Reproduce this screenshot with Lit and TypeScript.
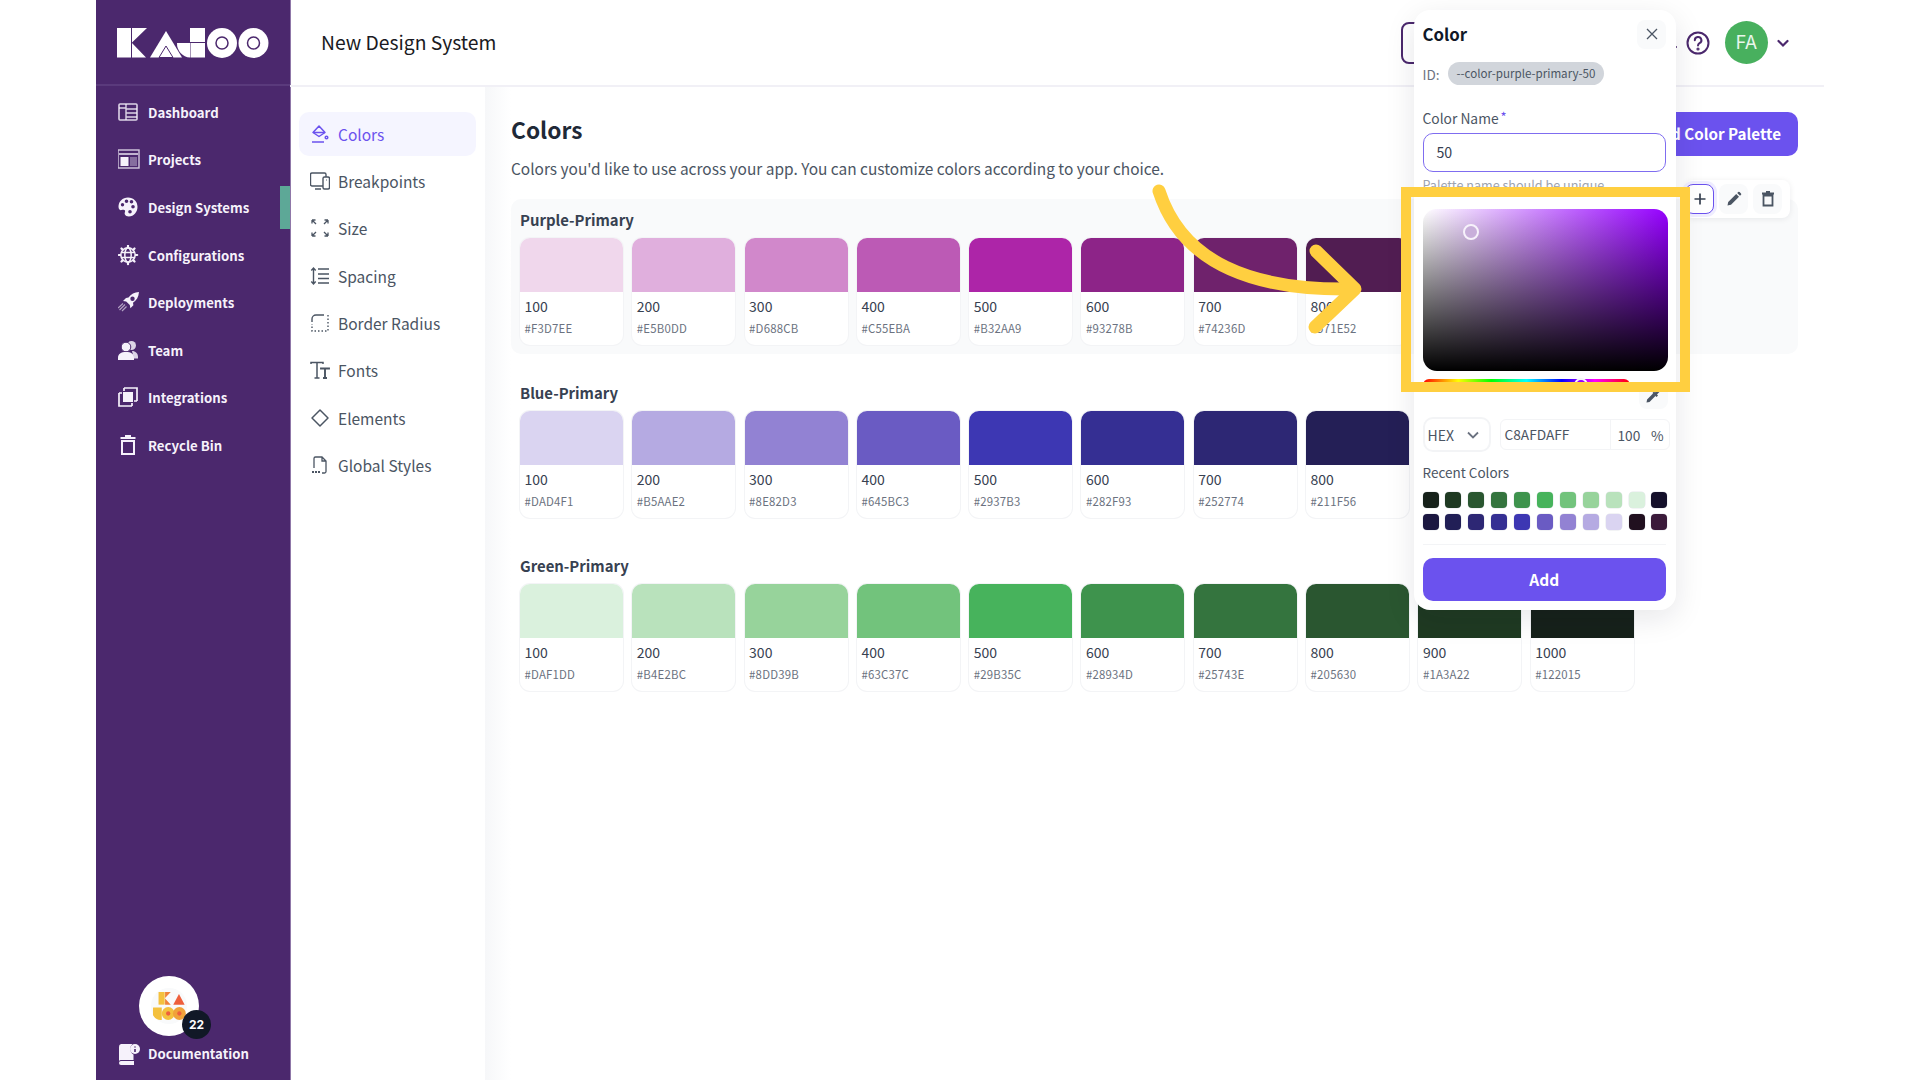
import { LitElement, html, css, svg } from "lit";
import { customElement } from "lit/decorators.js";

const W = "#f6f2fb";
const navIcons: Record<string, any> = {
  dashboard: svg`<rect x="1" y="2" width="18" height="16" rx="1" fill="none" stroke="${W}" stroke-opacity=".85" stroke-width="1.6"/><path d="M8 2v16M8 7h11M8 11h11M8 15h11M1 6h7" stroke="${W}" stroke-opacity=".85" stroke-width="1.4" fill="none"/>`,
  projects: svg`<rect x="0" y="1" width="21" height="18" fill="none" stroke="${W}" stroke-opacity=".8" stroke-width="1.4"/><path d="M1 5h19" stroke="${W}" stroke-width="1.4"/><rect x="2.5" y="8" width="8" height="9" fill="${W}"/><rect x="12" y="8" width="7" height="9" fill="${W}" fill-opacity=".35"/>`,
  palette: svg`<path fill-rule="evenodd" fill="${W}" d="M10 .5C4.6.5.5 4.5.5 9.8c0 2.7 1.6 3.6 3 3.3 1.700-.3 2.900-.6 3.500.5.6 1-.8 2.200-.2 3.700.6 1.400 2.200 2.200 4 2.200 5.200 0 8.700-4.500 8.700-9.700C19.500 4.500 15.500.5 10 .5zM4.500 9.500a1.700 1.700 0 1 1 0-3.400 1.700 1.700 0 0 1 0 3.400zM8.500 6a1.800 1.800 0 1 1 0-3.600A1.800 1.800 0 0 1 8.500 6zm5 .5a1.800 1.800 0 1 1 0-3.600 1.800 1.800 0 0 1 0 3.600zm1.500 5a1.800 1.800 0 1 1 0-3.600 1.800 1.800 0 0 1 0 3.600zm-3 5a1.800 1.800 0 1 1 0-3.600 1.800 1.800 0 0 1 0 3.600z"/>`,
  config: svg`<g fill="none" stroke="${W}" stroke-width="1.500"><circle cx="10" cy="10" r="7.200"/><ellipse cx="10" cy="10" rx="3.200" ry="7.200"/><path d="M3 7.500h14M3 12.500h14"/></g><path stroke="${W}" stroke-width="2.200" stroke-linecap="round" d="M10 .8v1.600M10 17.600v1.600M.8 10h1.600M17.600 10h1.600M3.500 3.500l1.100 1.100M15.400 15.400l1.100 1.100M16.500 3.500l-1.100 1.100M4.600 15.400l-1.100 1.100"/>`,
  rocket: svg`<path fill-rule="evenodd" fill="${W}" d="M21 0c-4.500.3-8 2-10.500 5.500L8 6 5 9l3.200.6L11.800 13l.6 3.200 3-3-.4-2.500C18.500 8.500 20.600 5 21 0zM14.500 9a2.200 2.200 0 1 1 0-4.400 2.200 2.200 0 0 1 0 4.400z"/><path d="M7 12.500 1.500 18M8.500 14.500 4 19M5 11.500 0 16" stroke="${W}" stroke-opacity=".6" stroke-width="1.200"/>`,
  team: svg`<circle cx="13.500" cy="5.500" r="4.500" fill="${W}" fill-opacity=".85"/><path d="M14 11c3.500 0 6 2.500 6 6v1.500h-4z" fill="${W}" fill-opacity=".85"/><circle cx="8" cy="7" r="4.800" fill="${W}" stroke="#4b286d"/><path d="M0 20v-2.500C0 14 3 12 8 12s8 2 8 5.500V20z" fill="${W}"/>`,
  integrations: svg`<path d="M6 1h13v13M1 6v13h13" fill="none" stroke="${W}" stroke-width="1.700"/><path d="M6 1v3M19 14h-3M1 6h3M14 19v-3" stroke="${W}" stroke-width="1.700"/><rect x="5" y="5" width="10" height="10" fill="${W}"/>`,
  bin: svg`<path d="M4 6h12v13H4z" fill="none" stroke="${W}" stroke-width="2"/><path d="M2.500 3h15M7 1h6" stroke="${W}" stroke-width="1.800"/>`,
  docs: svg`<path fill="${W}" d="M3 1h11.500a6.500 6.500 0 0 0 1 10.600V17H3.500A2.500 2.500 0 0 0 1 18V4a3 3 0 0 1 2-3zM1 20a2 2 0 0 1 2-2h13v4H3a2 2 0 0 1-2-2z"/><circle cx="17" cy="6" r="5" fill="${W}"/><path d="M17 3.500v1M17 6v3" stroke="#4b286d" stroke-width="1.600"/>`,
};

const G = "#4b5563";
const subIcons: Record<string, any> = {
  colors: svg`<g fill="none" stroke="#6b52ee" stroke-width="1.500"><path d="M9 2 3 8.500l6 4 6-4z" stroke-linejoin="round"/><path d="M3.500 8.500h11.500M2 18h12"/><circle cx="16.500" cy="13.500" r="1.300"/></g>`,
  breakpoints: svg`<g fill="none" stroke="${G}" stroke-width="1.400"><path d="M13 15H2a1.500 1.500 0 0 1-1.500-1.500V3.500A1.500 1.500 0 0 1 2 2h12.500A1.500 1.500 0 0 1 16 3.500V6"/><rect x="13" y="6" width="6.500" height="12" rx="1.500"/><path d="M5 18h6M16 9h.6"/></g>`,
  size: svg`<g fill="none" stroke="${G}" stroke-width="1.300"><path d="M2 2l4 4M2 2v3.500M2 2h3.500M18 2l-4 4M18 2v3.500M18 2h-3.500M2 18l4-4M2 18v-3.500M2 18h3.500M18 18l-4-4M18 18v-3.500M18 18h-3.500"/></g>`,
  spacing: svg`<g fill="none" stroke="${G}" stroke-width="1.400"><path d="M3.500 2v16M1.300 4.500 3.500 2l2.200 2.500M1.300 15.500 3.500 18l2.200-2.500M8 3h11M8 8h11M8 12.500h11M8 17h11"/></g>`,
  radius: svg`<g fill="none" stroke="${G}" stroke-width="1.400"><path d="M2 9V6a4 4 0 0 1 4-4h8" /><path stroke-dasharray="1.500 2" d="M18 2v16H2v-7"/></g>`,
  fonts: svg`<g fill="none" stroke="${G}" stroke-width="1.500"><path d="M1 4V2.500h12V4M7 2.500V18M4.500 18h5"/><path d="M11 9.500V8.500h8v1M15 8.500V18M13 18h4" stroke-width="1.900"/></g>`,
  elements: svg`<path d="M10 2 18 10 10 18 2 10z" fill="none" stroke="${G}" stroke-width="1.500" stroke-linejoin="round"/>`,
  css: svg`<g fill="none" stroke="${G}" stroke-width="1.300"><path d="M4 13V3.500A1.500 1.500 0 0 1 5.500 2H12l4 4v10.500a1.500 1.500 0 0 1-1.500 1.500H12M12 2v4h4"/><path stroke-dasharray="2 1" stroke-width="2" d="M2 17h8"/></g>`,
};

const sidebarNav = [
  ["Dashboard", "dashboard"], ["Projects", "projects"], ["Design Systems", "palette"], ["Configurations", "config"],
  ["Deployments", "rocket"], ["Team", "team"], ["Integrations", "integrations"], ["Recycle Bin", "bin"],
];
const subNav = [
  ["Colors", "colors"], ["Breakpoints", "breakpoints"], ["Size", "size"], ["Spacing", "spacing"],
  ["Border Radius", "radius"], ["Fonts", "fonts"], ["Elements", "elements"], ["Global Styles", "css"],
];
const steps = ["100", "200", "300", "400", "500", "600", "700", "800", "900", "1000"];
const palettes = [
  { name: "Purple-Primary", active: true, shown: ["#F0D7EC","#E0AFDD","#D188CB","#BC5AB5","#AD25A8","#8D2488","#6F226C","#511D52","#3B1A3A","#21101F"], hex: ["#F3D7EE","#E5B0DD","#D688CB","#C55EBA","#B32AA9","#93278B","#74236D","#571E52","#3B1A3A","#21101F"] },
  { name: "Blue-Primary", active: false, shown: ["#DAD4F1","#B5AAE2","#9282D3","#6A5BC3","#3D37B3","#352F93","#2D2774","#241F56","#1B1740","#14102A"], hex: ["#DAD4F1","#B5AAE2","#8E82D3","#645BC3","#2937B3","#282F93","#252774","#211F56","#1B1740","#14102A"] },
  { name: "Green-Primary", active: false, shown: ["#DAF1DD","#B9E2BC","#97D39B","#72C37C","#47B35C","#3E934D","#34743E","#2A5630","#1F3A22","#16211A"], hex: ["#DAF1DD","#B4E2BC","#8DD39B","#63C37C","#29B35C","#28934D","#25743E","#205630","#1A3A22","#122015"] },
];
const recent = [
  "#16211a","#1f3a22","#2a5630","#34743e","#3e934d","#47b35c","#72c37c","#97d39b","#b9e2bc","#daf1dd","#14102a",
  "#1b1740","#211f56","#2d2774","#352f93","#3d37b3","#6a5bc3","#9282d3","#b5aae2","#dad4f1","#21101f","#3b1a3a",
];

function logo(a: string, b: string, cut: string) {
  return svg`
    <rect x="0" y="0" width="14" height="29.500" fill="${a}"/>
    <path d="M15 0h15L15 14.500zM15 15l14 14.500H15z" fill="${a}"/>
    <path d="M33 29.500 49 3 65 29.500z" fill="${a}"/>
    <path d="M42 29.500 49 18l7 11.500z" fill="none" stroke="${cut}" stroke-width="1"/>
    <rect x="73" y="0" width="15" height="14" fill="${a}"/>
    <rect x="73.500" y="15" width="14.500" height="14.500" fill="${a}"/>
    <path d="M60 15h13v14.500A14 14 0 0 1 60 15z" fill="${a}"/>
    <circle cx="105" cy="15" r="15" fill="${b}"/>
    <circle cx="105" cy="15" r="6" fill="none" stroke="${cut}" stroke-width="1.500"/>
    <circle cx="136.500" cy="15" r="15" fill="${b}"/>
    <circle cx="136.500" cy="15" r="6" fill="none" stroke="${cut}" stroke-width="1.500"/>`;
}

@customElement("app-root")
export class AppRoot extends LitElement {
  static styles = css`
    :host { display: block; width: 1920px; height: 1080px; font-family: "Noto Sans CJK SC", "Noto Sans", sans-serif; }
    * { box-sizing: border-box; }
    .page { position: relative; width: 1920px; height: 1080px; overflow: hidden; background: #fff; display: flex; padding: 0 96px; }
    .sidebar { width: 195px; flex: none; background: #4b286d; border-right: 1px solid #8f77a8; display: flex; flex-direction: column; }
    .brand { height: 86px; flex: none; border-bottom: 2px solid #5a3a7c; padding: 28px 0 0 21px; }
    .brand svg { display: block; }
    .nav { padding-top: 3px; display: flex; flex-direction: column; position: relative; }
    .nav-item { height: 47.6px; display: flex; align-items: center; gap: 8px; padding-left: 22px; font-size: 13.200px; font-weight: 600; line-height: 20px; color: #f6f2fb; position: relative; }
    .nav-item svg { width: 22px; height: 22px; flex: none; }
    .indicator { position: absolute; right: 0; top: 2px; width: 10px; height: 43px; background: #5da897; }
    .side-foot { margin-top: auto; padding-bottom: 14px; }
    .avatar { position: relative; width: 60px; height: 60px; margin: 0 0 0 43px; border-radius: 50%; background: #fff; display: flex; align-items: center; justify-content: center; }
    .avatar-in { width: 36px; height: 36px; border-radius: 50%; background: #f9fafb; display: flex; align-items: center; justify-content: center; }
    .badge { position: absolute; left: 43px; top: 34px; width: 29px; height: 29px; border-radius: 50%; background: #111827; color: #fff; font: 700 12px/29px Inter, sans-serif; text-align: center; }
    .side-foot .nav-item { height: 24px; margin-top: 6px; }

    .right { flex: 1; min-width: 0; display: flex; flex-direction: column; margin-left: -1px; }
    .topbar { height: 87px; flex: none; display: flex; align-items: center; padding: 0 34px 0 31px; border-bottom: 2px solid #f1f0f6; }
    .topbar h1 { margin: 0 0 1px; font-size: 19.300px; font-weight: 400; line-height: 28px; color: #1a1a22; }
    .outline { margin-left: auto; width: 268px; height: 42px; border: 2px solid #4b286d; border-radius: 8px; }
    .dot { width: 2px; height: 2px; border-radius: 50%; background: #4b286d; margin: 8px 0 0 6px; align-self: center; }
    .help { margin-left: 9px; width: 24px; height: 24px; display: block; }
    .user { margin-left: 15px; width: 43px; height: 43px; border-radius: 50%; background: #48b05e; color: #e9f6eb; font: 400 18px/43px Inter, sans-serif; text-align: center; }
    .caret { margin-left: 8px; width: 14px; height: 14px; }

    .body { flex: 1; min-height: 0; display: flex; }
    .subnav { width: 195px; flex: none; padding: 25px 9px 0; display: flex; flex-direction: column; gap: 3.400px; }
    .sub-item { height: 44px; border-radius: 10px; display: flex; align-items: center; gap: 8px; padding: 0 0 1px 11px; font-size: 15.500px; line-height: 22px; color: #4b5563; }
    .sub-item svg { width: 20px; height: 20px; flex: none; }
    .sub-item.on { background: #f5f5ff; color: #6b52ee; }

    .main { flex: 1; min-width: 0; padding: 25px 26px 0; background: linear-gradient(to right, #f6f7f9, #fff 26px); }
    .title-row { height: 44px; display: flex; align-items: flex-start; justify-content: space-between; }
    .title-row h2 { margin: 0; font-size: 22.700px; font-weight: 600; line-height: 36px; color: #1f2937; }
    .primary { height: 44px; padding: 0 17px 2px; border: 0; border-radius: 10px; background: #6b52ee; color: #fff; font: 600 15.200px/24px "Noto Sans CJK SC", sans-serif; }
    .lede { margin: 0; font-size: 15.450px; line-height: 24px; color: #4b5563; height: 43px; }

    .palettes { display: flex; flex-direction: column; gap: 18px; }
    .palette { position: relative; padding: 11px 0 9px 9px; border-radius: 10px; }
    .palette.on { background: #f9fafb; }
    .palette h3 { margin: 0 0 8px; font-size: 14.900px; font-weight: 600; line-height: 20px; color: #374151; }
    .swatches { display: flex; gap: 9.300px; }
    .swatch { width: 103px; height: 107px; background: #fff; border-radius: 10px; overflow: hidden; box-shadow: 0 0 0 1px #f3f4f6; flex: none; }
    .chip { height: 54px; }
    .num { margin: 3.500px 0 0 4.500px; font-size: 14px; line-height: 20px; color: #374151; }
    .hex { margin: 4.500px 0 0 4.500px; font-size: 11.400px; line-height: 16px; color: #6b7280; letter-spacing: .2px; }
    .tools { position: absolute; right: 8px; top: -19px; height: 38px; display: flex; align-items: center; gap: 5px; padding: 0 8px 0 0; background: #fff; border-radius: 8px; box-shadow: 0 1px 6px rgba(17,24,39,.08); }
    .tool { width: 29px; height: 30px; border-radius: 8px; background: #f9fafb; display: flex; align-items: center; justify-content: center; }
    .tool svg { width: 18px; height: 18px; }
    .tool.plus { background: #fff; border: 1px solid #6b52ee; box-shadow: 0 0 0 3px #efedff; }

    .pop { position: absolute; left: 1414px; top: 10px; width: 262px; height: 600px; padding: 9px 10px 9px 8.500px; background: #fff; border-radius: 16px; box-shadow: 0 8px 30px rgba(17,24,39,.10); }
    .pop-head { height: 30px; display: flex; align-items: center; justify-content: space-between; }
    .pop-head b { font-size: 16.800px; font-weight: 600; line-height: 26px; color: #111827; }
    .close { width: 29px; height: 29px; border-radius: 8px; background: #f9fafb; display: flex; align-items: center; justify-content: center; }
    .id { margin-top: 13px; height: 23px; display: flex; align-items: center; gap: 8px; font-size: 13.500px; line-height: 20px; color: #6b7280; }
    .id span { height: 23px; padding: 0 9px; border-radius: 12px; background: #d1d5db; color: #4b5563; font-size: 11.600px; line-height: 22px; }
    .lab { margin: 23px 0 5px; height: 20px; font-size: 13.800px; line-height: 20px; color: #4b5563; }
    .lab i { color: #6b52ee; font-style: normal; font-size: 13px; vertical-align: 2px; margin-left: 2px; line-height: 1; }
    .field { height: 39px; border: 1px solid #7f6df0; border-radius: 10px; padding-left: 13px; font-size: 14.200px; line-height: 37px; color: #374151; }
    .helper { margin-top: 4px; height: 18px; font-size: 12.600px; line-height: 18px; color: #9ca3af; }
    .sv { margin-top: 15px; width: 245px; height: 162px; border-radius: 14px; position: relative; background: linear-gradient(to top, #000, transparent), linear-gradient(to right, #fff, #9500ff); }
    .sv-thumb { position: absolute; left: 40px; top: 15px; width: 16px; height: 16px; border-radius: 50%; background: #c8afda; border: 2px solid #f7f2fb; }
    .hue-row { margin-top: 8px; height: 30px; display: flex; gap: 9px; align-items: flex-start; width: 245px; }
    .hue { position: relative; width: 207px; height: 12px; border-radius: 6px; background: linear-gradient(to right, #f00, #ff0 17%, #0f0 33%, #0ff 50%, #00f 67%, #f0f 83%, #f00); }
    .hue-thumb { position: absolute; left: 151px; top: -1px; width: 14px; height: 14px; border-radius: 50%; background: #9500ff; border: 2px solid #f7f2fb; }
    .drop { margin-top: 3px; width: 29px; height: 27px; border-radius: 8px; background: #f9fafb; display: flex; align-items: center; justify-content: center; }
    .fmt { margin-top: 8px; display: flex; align-items: center; gap: 9px; width: 247px; }
    .select { width: 68px; height: 35px; border: 2px solid #f3f4f6; border-radius: 10px; display: flex; align-items: center; justify-content: space-between; padding: 0 9px 0 3px; font-size: 14px; color: #4b5563; }
    .group { flex: 1; height: 31px; border: 1px solid #f3f4f6; border-radius: 6px; display: flex; align-items: center; font-size: 13.700px; color: #4b5563; }
    .hexv { width: 110px; padding-left: 4px; height: 100%; line-height: 29px; border-right: 1px solid #f3f4f6; }
    .alpha { flex: 1; display: flex; justify-content: space-between; padding: 0 5px 0 7px; }
    .rec { margin-top: 9.500px; font-size: 13.500px; line-height: 20px; color: #4b5563; }
    .grid { margin-top: 10.500px; width: 245px; display: grid; grid-template-columns: repeat(11, 16px); justify-content: space-between; row-gap: 6px; }
    .grid div { height: 16px; border-radius: 4px; box-shadow: 0 0 0 .5px #e5e7eb; }
    .rule { margin-top: 14px; height: 1px; background: #f3f4f6; }
    .add { margin-top: 13px; height: 43px; border-radius: 10px; background: #6b52ee; color: #fff; font-size: 15.500px; font-weight: 600; line-height: 43px; text-align: center; }

    .frame { position: absolute; left: 1401px; top: 187px; width: 289px; height: 205px; border: 10px solid #ffcf40; pointer-events: none; }
    .arrow { position: absolute; left: 1140px; top: 170px; width: 240px; height: 180px; pointer-events: none; }
  `;

  render() {
    return html`
      <div class="page">
        <aside class="sidebar">
          <div class="brand"><svg width="152" height="30" viewBox="0 0 152 30">${logo("#fff", "#fff", "#4b286d")}</svg></div>
          <nav class="nav">
            ${sidebarNav.map(([label, ic]) => html`
              <div class="nav-item"><svg viewBox="0 0 22 22">${navIcons[ic]}</svg>${label}
                ${label === "Design Systems" ? html`<span class="indicator"></span>` : ""}</div>`)}
          </nav>
          <div class="side-foot">
            <div class="avatar">
              <div class="avatar-in">
                <svg width="33" height="29" viewBox="0 0 152 135">
                  <g transform="translate(25 0) scale(.95)">
                    <rect width="30" height="62" fill="#f4c13e"/><path d="M32 0h28L32 30zM32 32l28 30H32z" fill="#f0833a"/>
                    <path d="M72 62 100 10l28 52z" fill="#ee5f3c"/>
                  </g>
                  <path d="M0 72h40v58A40 40 0 0 1 0 72z" fill="#f4c13e"/>
                  <circle cx="70" cy="100" r="30" fill="#f4c13e"/><circle cx="70" cy="100" r="10" fill="#ee5f3c"/>
                  <circle cx="122" cy="100" r="30" fill="#f0a23a"/><circle cx="122" cy="100" r="10" fill="#ee5f3c"/>
                </svg>
              </div>
              <div class="badge">22</div>
            </div>
            <div class="nav-item"><svg viewBox="0 0 22 22">${navIcons.docs}</svg>Documentation</div>
          </div>
        </aside>
        <div class="right">
          <header class="topbar">
            <h1>New Design System</h1>
            <div class="outline"></div>
            <span class="dot"></span>
            <svg class="help" viewBox="0 0 24 24" fill="none" stroke="#4b286d" stroke-width="2"><circle cx="12" cy="12" r="10.500"/><path d="M8.800 9.200a3.300 3.300 0 1 1 4.700 3c-1 .6-1.500 1.100-1.500 2.300" stroke-linecap="round"/><circle cx="12" cy="18" r=".6" fill="#4b286d"/></svg>
            <div class="user">FA</div>
            <svg class="caret" viewBox="0 0 14 14" fill="none" stroke="#4b286d" stroke-width="2.200" stroke-linecap="round"><path d="M2.500 5 7 9.500 11.500 5"/></svg>
          </header>
          <div class="body">
            <div class="subnav">
              ${subNav.map(([label, ic], i) => html`<div class="sub-item ${i === 0 ? "on" : ""}"><svg viewBox="0 0 20 20">${subIcons[ic]}</svg>${label}</div>`)}
            </div>
            <main class="main">
              <div class="title-row"><h2>Colors</h2><button class="primary">Add Color Palette</button></div>
              <p class="lede">Colors you'd like to use across your app. You can customize colors according to your choice.</p>
              <div class="palettes">
                ${palettes.map((p) => html`
                  <section class="palette ${p.active ? "on" : ""}">
                    <h3>${p.name}</h3>
                    <div class="swatches">
                      ${steps.map((s, i) => html`
                        <div class="swatch">
                          <div class="chip" style="background:${p.shown[i]}"></div>
                          <div class="num">${s}</div>
                          <div class="hex">${p.hex[i]}</div>
                        </div>`)}
                    </div>
                    ${p.active ? html`
                      <div class="tools">
                        <div class="tool plus"><svg viewBox="0 0 18 18" fill="none" stroke="#374151" stroke-width="1.700"><path d="M9 3.500v11M3.500 9h11"/></svg></div>
                        <div class="tool"><svg viewBox="0 0 18 18" fill="#4b5563"><path d="M2.500 15.500l.7-3.500 8-8 2.800 2.800-8 8zM12.200 3l1-1a1 1 0 0 1 1.400 0l1.400 1.400a1 1 0 0 1 0 1.400l-1 1z"/></svg></div>
                        <div class="tool"><svg viewBox="0 0 18 18" fill="none" stroke="#4b5563" stroke-width="1.800"><path d="M4.500 5.500h9v10h-9zM3 3.500h12M7 2h4"/></svg></div>
                      </div>` : ""}
                  </section>`)}
              </div>
            </main>
          </div>
        </div>

        <div class="pop">
          <div class="pop-head"><b>Color</b><div class="close"><svg width="14" height="14" viewBox="0 0 14 14" stroke="#4b5563" stroke-width="1.300" fill="none"><path d="M2 2l10 10M12 2 2 12"/></svg></div></div>
          <div class="id">ID:<span>--color-purple-primary-50</span></div>
          <div class="lab">Color Name<i>*</i></div>
          <div class="field">50</div>
          <div class="helper">Palette name should be unique</div>
          <div class="sv"><div class="sv-thumb"></div></div>
          <div class="hue-row">
            <div class="hue"><div class="hue-thumb"></div></div>
            <div class="drop"><svg width="16" height="16" viewBox="0 0 16 16" fill="#4b5563"><path d="M1.500 14.500l.6-3L8 5.600 10.400 8l-5.900 5.900zM9 3.500l1 1 2.400-2.400a1.400 1.400 0 0 1 2 2L12 6.500l1 1-1.500 1.500-4-4z"/></svg></div>
          </div>
          <div class="fmt">
            <div class="select">HEX<svg width="14" height="14" viewBox="0 0 14 14" fill="none" stroke="#6b7280" stroke-width="1.800"><path d="M2 4.500 7 9.500l5-5"/></svg></div>
            <div class="group"><div class="hexv">C8AFDAFF</div><div class="alpha"><span>100</span><span>%</span></div></div>
          </div>
          <div class="rec">Recent Colors</div>
          <div class="grid">${recent.map((c) => html`<div style="background:${c}"></div>`)}</div>
          <div class="rule"></div>
          <div class="add">Add</div>
        </div>

        <div class="frame"></div>
        <svg class="arrow" viewBox="1140 170 240 180" fill="none" stroke="#ffcf40" stroke-width="13" stroke-linecap="round" stroke-linejoin="round">
          <path d="M1159 191C1182 262 1250 291 1354 289"/>
          <path d="M1316 251 1355 289 1315 327"/>
        </svg>
      </div>
    `;
  }
}
